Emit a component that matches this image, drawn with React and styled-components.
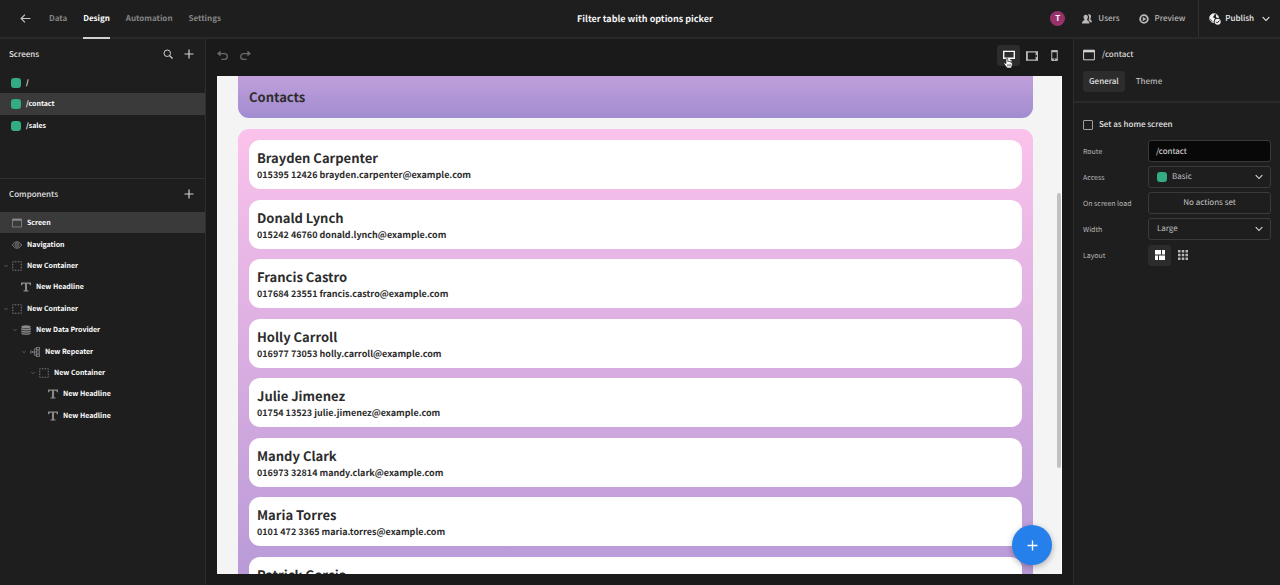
import { useState } from "react";
import styled, { createGlobalStyle } from "styled-components";

const navLinks = ["Data", "Design", "Automation", "Settings"];

const screens = ["/", "/contact", "/sales"];

const components = [
    { name: "Screen", icon: "screen", level: 0 },
    { name: "Navigation", icon: "eye", level: 0 },
    { name: "New Container", icon: "container", level: 0, open: true },
    { name: "New Headline", icon: "text", level: 1 },
    { name: "New Container", icon: "container", level: 0, open: true },
    { name: "New Data Provider", icon: "data", level: 1, open: true },
    { name: "New Repeater", icon: "repeater", level: 2, open: true },
    { name: "New Container", icon: "container", level: 3, open: true },
    { name: "New Headline", icon: "text", level: 4 },
    { name: "New Headline", icon: "text", level: 4 },
];

const contacts = [
    { name: "Brayden Carpenter", details: "015395 12426 brayden.carpenter@example.com" },
    { name: "Donald Lynch", details: "015242 46760 donald.lynch@example.com" },
    { name: "Francis Castro", details: "017684 23551 francis.castro@example.com" },
    { name: "Holly Carroll", details: "016977 73053 holly.carroll@example.com" },
    { name: "Julie Jimenez", details: "01754 13523 julie.jimenez@example.com" },
    { name: "Mandy Clark", details: "016973 32814 mandy.clark@example.com" },
    { name: "Maria Torres", details: "0101 472 3365 maria.torres@example.com" },
    { name: "Patrick Garcia", details: "" },
];

// every icon is drawn on a 20 x 20 grid
const icons = {
    back: <path d="M19 10H2M9 3L2 10l7 7" fill="none" stroke="currentColor" strokeWidth="2" />,
    search: (
        <g fill="none" stroke="currentColor" strokeWidth="2">
            <circle cx="8.5" cy="8.5" r="6.5" />
            <path d="M13.2 13.2L19 19" strokeWidth="2.6" />
        </g>
    ),
    plus: <path d="M10 1v18M1 10h18" fill="none" stroke="currentColor" strokeWidth="2.4" />,
    chevron: <path d="M2.5 6l7.5 8 7.5-8" fill="none" stroke="currentColor" strokeWidth="2.6" strokeLinecap="round" />,
    undo: (
        <>
            <path d="M5 6.5h8.5a4.7 4.7 0 010 10.5H8" fill="none" stroke="currentColor" strokeWidth="2.4" />
            <path d="M0 6.5L6.5 1v11z" fill="currentColor" />
        </>
    ),
    redo: (
        <>
            <path d="M15 6.5H6.5a4.7 4.7 0 000 10.5H12" fill="none" stroke="currentColor" strokeWidth="2.4" />
            <path d="M20 6.5L13.5 1v11z" fill="currentColor" />
        </>
    ),
    desktop: (
        <>
            <path d="M1.2 2.2h17.6v11.6H1.2z" fill="none" stroke="currentColor" strokeWidth="2.2" />
            <path d="M8 14h4v3h2.5v2h-9v-2H8z" fill="currentColor" />
        </>
    ),
    tablet: (
        <>
            <path d="M1 3h18v14H1z" fill="none" stroke="currentColor" strokeWidth="2" />
            <path d="M1 2.5h2v15H1zM16 2.5h3v15h-3z" fill="currentColor" />
            <circle cx="17" cy="10" r="1.5" fill="#1a1a1a" />
        </>
    ),
    phone: (
        <>
            <path d="M5 1h10v18H5z" fill="none" stroke="currentColor" strokeWidth="1.8" />
            <path d="M4.5 1h11v3h-11zM4.5 15.5h11V19h-11z" fill="currentColor" />
            <circle cx="10" cy="17" r="1.3" fill="#1a1a1a" />
        </>
    ),
    screen: (
        <>
            <path d="M1 2h18v16H1z" fill="none" stroke="currentColor" strokeWidth="1.6" />
            <path d="M1 2h18v3.5H1z" fill="currentColor" />
        </>
    ),
    eye: (
        <>
            <path d="M1 10c4-8.5 14-8.5 18 0-4 8.5-14 8.5-18 0z" fill="none" stroke="currentColor" strokeWidth="1.8" />
            <circle cx="10" cy="10" r="4" fill="none" stroke="currentColor" strokeWidth="1.6" />
            <circle cx="10" cy="10" r="1.6" fill="currentColor" />
        </>
    ),
    container: (
        <path d="M1.5 1.5h17v17h-17z" fill="none" stroke="currentColor" strokeWidth="1.8" strokeDasharray="3 2.667" strokeDashoffset="1.5" />
    ),
    text: <path d="M0 1h20v5.5h-2.200L16.500 3.500H12v13l3 .5v2H5v-2l3-.5v-13H3.500L2.200 6.500H0z" fill="currentColor" />,
    data: (
        <>
            <ellipse cx="10" cy="3.5" rx="9.5" ry="3.2" fill="currentColor" />
            <path d="M.5 5.500c2 2.700 17 2.700 19 0v3.300c-2 2.800-17 2.800-19 0zM.5 10.700c2 2.700 17 2.700 19 0v2.800c-2 2.800-17 2.800-19 0zM.5 15.200c2 2.700 17 2.700 19 0v1.500c0 4-19 4-19 0z" fill="currentColor" />
        </>
    ),
    repeater: (
        <g fill="none" stroke="currentColor" strokeWidth="1.6">
            <circle cx="3" cy="10" r="2.3" />
            <path d="M5.300 10H13M9 10V3.500h4M9 10v6.500h4" />
            <rect x="13" y="1" width="6" height="4.5" />
            <rect x="13" y="7.8" width="6" height="4.5" />
            <rect x="13" y="14.5" width="6" height="4.5" />
        </g>
    ),
    users: (
        <>
            <path d="M12 1c4.500-1.500 6.500 1.500 6 5-.2 2-1 3-1.500 4 0 2 3.500 2 3.500 6.500h-4c-.5-3-2.500-4-3-5 2-3 2-7.500-1-10.500z" fill="currentColor" />
            <path d="M7.500 1.500c3 0 4.500 2.200 4.300 5-.1 2-.9 3.500-1.900 4.500 0 2 5 2 5 8H0c0-6 5-6 5-8-1-1-1.800-2.500-1.900-4.500-.2-2.800 1.400-5 4.400-5z" fill="currentColor" />
        </>
    ),
    preview: (
        <>
            <circle cx="10" cy="10" r="7.7" fill="none" stroke="currentColor" strokeWidth="3.6" />
            <path d="M7.500 5.500l7 4.500-7 4.500z" fill="currentColor" />
        </>
    ),
    globe: (
        <>
            <circle cx="8.5" cy="8.5" r="7.5" fill="none" stroke="currentColor" strokeWidth="1.3" />
            <path d="M1.500 6l2.800-4 3.200-.8 2.500 1.600-2.500 2-.5 2.500 3 1.500-1.200 3.700L6.500 16 4 11.500 1.500 9.500zM12 2.500l3.500 3-1 3-3-1.500z" fill="currentColor" />
            <circle cx="14.5" cy="14.5" r="6" fill="#1e1e1e" />
            <circle cx="14.5" cy="14.5" r="5" fill="currentColor" />
            <path d="M11.800 14.500l2 2.200 3.500-4.200" fill="none" stroke="#1e1e1e" strokeWidth="1.6" />
        </>
    ),
    masonry: <path d="M0 0h12v9H0zM14 0h6v9h-6zM0 11h6v9H0zM8 11h12v9H8z" fill="currentColor" />,
    grid: (
        <path d="M0 0h5v5H0zM7.500 0h5v5h-5zM15 0h5v5h-5zM0 7.500h5v5H0zM7.500 7.500h5v5h-5zM15 7.500h5v5h-5zM0 15h5v5H0zM7.500 15h5v5h-5zM15 15h5v5h-5z" fill="currentColor" />
    ),
};

const Icon = ({ name, size = 10, color }) => (
    <Svg viewBox="0 0 20 20" $size={size} $color={color} aria-hidden="true">
        {icons[name]}
    </Svg>
);

const Header = () => (
    <TopBar>
        <Nav>
            <BackLink href="#back" aria-label="Back"><Icon name="back" size={11} /></BackLink>
            {navLinks.map((link) =>
                <NavLink key={link} href={`#${link}`} $active={link === "Design"}>{link}</NavLink>
            )}
        </Nav>
        <Title>Filter table with options picker</Title>
        <Actions>
            <Avatar>T</Avatar>
            <Action><Icon name="users" />Users</Action>
            <Action><Icon name="preview" />Preview</Action>
            <Publish>
                <Icon name="globe" size={12} />
                Publish
                <Icon name="chevron" size={8} />
            </Publish>
        </Actions>
    </TopBar>
);

const Sidebar = () => {
    const [screen, setScreen] = useState("/contact");
    const [selected, setSelected] = useState(0);

    return (
        <Side>
            <ScreensPanel>
                <PanelHead>
                    <PanelTitle>Screens</PanelTitle>
                    <PlainButton aria-label="Search screens"><Icon name="search" /></PlainButton>
                    <PlainButton aria-label="Add screen"><Icon name="plus" /></PlainButton>
                </PanelHead>
                <ScreenList>
                    {screens.map((route) =>
                        <Item key={route}>
                            <ScreenRow $active={route === screen} onClick={() => setScreen(route)}>
                                <Swatch />
                                {route}
                            </ScreenRow>
                        </Item>
                    )}
                </ScreenList>
            </ScreensPanel>
            <PanelHead>
                <PanelTitle>Components</PanelTitle>
                <PlainButton aria-label="Add component"><Icon name="plus" /></PlainButton>
            </PanelHead>
            <Tree>
                {components.map((item, i) =>
                    <Item key={i}>
                        <TreeRow $level={item.level} $active={i === selected} onClick={() => setSelected(i)}>
                            <Arrow>{item.open && <Icon name="chevron" size={4} />}</Arrow>
                            <Icon name={item.icon} color="#8a8a8a" />
                            <TreeLabel>{item.name}</TreeLabel>
                        </TreeRow>
                    </Item>
                )}
            </Tree>
        </Side>
    );
};

const Preview = () => (
    <Main>
        <Toolbar>
            <ToolButton aria-label="Undo" $dim><Icon name="undo" size={11} /></ToolButton>
            <ToolButton aria-label="Redo" $dim><Icon name="redo" size={11} /></ToolButton>
            <Spacer />
            <ToolButton aria-label="Desktop" $active>
                <Icon name="desktop" size={12} />
                <Pointer viewBox="0 0 20 22" aria-hidden="true">
                    <path
                        d="M6 12.500V3c0-2.600 3.500-2.600 3.500 0v5c1-1 3-.7 3.200.7 1-.9 2.800-.5 3 .8 1.200-.5 2.800 0 2.800 1.700v3.500c0 2-1.500 3-1.500 5V21H7.500v-1.500c-1.500-1.500-3.500-4-5.500-7-1-2 1.500-3 4 0z"
                        fill="#fff" stroke="#111" strokeWidth="1.2"
                    />
                    <path d="M9.500 13.500v4M12 13.500v4M14.500 13.500v4" stroke="#111" strokeWidth="1.2" />
                </Pointer>
            </ToolButton>
            <ToolButton aria-label="Tablet"><Icon name="tablet" size={12} /></ToolButton>
            <ToolButton aria-label="Mobile"><Icon name="phone" size={11} /></ToolButton>
        </Toolbar>
        <Canvas>
            <Page>
                <Banner><BannerTitle>Contacts</BannerTitle></Banner>
                <Repeater>
                    <Cards>
                        {contacts.map((contact) =>
                            <Card key={contact.name}>
                                <CardName>{contact.name}</CardName>
                                <CardDetails>{contact.details}</CardDetails>
                            </Card>
                        )}
                    </Cards>
                </Repeater>
            </Page>
            <Scrollbar />
            <AddButton aria-label="Add"><Icon name="plus" size={11} /></AddButton>
        </Canvas>
    </Main>
);

const Settings = () => {
    const [route, setRoute] = useState("/contact");

    return (
        <SettingsPanel>
            <SettingsHead>
                <RouteTitle><Icon name="screen" size={12} />/contact</RouteTitle>
                <Tabs>
                    <Tab $active>General</Tab>
                    <Tab>Theme</Tab>
                </Tabs>
            </SettingsHead>
            <Form>
                <CheckLabel>
                    <Checkbox type="checkbox" />
                    Set as home screen
                </CheckLabel>
                <Field>
                    <Label htmlFor="route">Route</Label>
                    <Input id="route" value={route} onChange={(e) => setRoute(e.target.value)} />
                </Field>
                <Field>
                    <Label htmlFor="access">Access</Label>
                    <SelectBox>
                        <Swatch />
                        <Select id="access"><option>Basic</option></Select>
                        <Icon name="chevron" size={8} />
                    </SelectBox>
                </Field>
                <Field>
                    <Label htmlFor="load">On screen load</Label>
                    <ActionsButton id="load" type="button">No actions set</ActionsButton>
                </Field>
                <Field>
                    <Label htmlFor="width">Width</Label>
                    <SelectBox>
                        <Select id="width"><option>Large</option></Select>
                        <Icon name="chevron" size={8} />
                    </SelectBox>
                </Field>
                <Field>
                    <Label as="span">Layout</Label>
                    <Layouts>
                        <ToolButton type="button" aria-label="Flex layout" $active><Icon name="masonry" /></ToolButton>
                        <ToolButton type="button" aria-label="Grid layout"><Icon name="grid" /></ToolButton>
                    </Layouts>
                </Field>
            </Form>
        </SettingsPanel>
    );
};

const App = () => (
    <>
        <GlobalStyle />
        <Shell>
            <Header />
            <Body>
                <Sidebar />
                <Preview />
                <Settings />
            </Body>
        </Shell>
    </>
);

export default App;

const GlobalStyle = createGlobalStyle`
  * {
    box-sizing: border-box;
  }

  body {
    margin: 0;
    background: #1a1a1a;
  }

  body, button, input, select {
    font-family: "Noto Sans CJK SC", "Open Sans", sans-serif;
    font-size: 8px;
    line-height: 16px;
    color: #d8d8d8;
    text-rendering: geometricPrecision;
  }

  button {
    cursor: pointer;
  }
`;

const Svg = styled.svg`
  display: block;
  flex: none;
  width: ${({ $size }) => $size}px;
  height: ${({ $size }) => $size}px;
  color: ${({ $color }) => $color || "inherit"};
`;

const Shell = styled.div`
  display: flex;
  flex-direction: column;
  height: 100vh;
  overflow: hidden;
`;

const TopBar = styled.header`
  display: grid;
  grid-template-columns: 1fr auto 1fr;
  height: 39px;
  padding: 0 10px 0 20px;
  background: #1e1e1e;
  box-shadow: inset 0 -2px #292929;
`;

const Nav = styled.nav`
  display: flex;
  gap: 16px;
`;

const BackLink = styled.a`
  display: flex;
  align-items: center;
  margin-right: 2px;
  padding-bottom: 2px;
  color: #c8c8c8;
`;

const NavLink = styled.a`
  display: flex;
  align-items: center;
  border-bottom: 2px solid ${({ $active }) => ($active ? "#d0d0d0" : "transparent")};
  color: ${({ $active }) => ($active ? "#fff" : "#858585")};
  font-weight: 600;
  text-decoration: none;
`;

const Title = styled.h1`
  align-self: center;
  margin: 0;
  padding-bottom: 2px;
  color: #f4f4f4;
  font-size: 9px;
  font-weight: 600;
`;

const Actions = styled.div`
  display: flex;
  align-items: center;
  justify-content: flex-end;
  padding-bottom: 2px;
`;

const Avatar = styled.div`
  width: 15px;
  height: 15px;
  margin-right: 17px;
  border-radius: 50%;
  background: #97326b;
  color: #fff;
  font-weight: 600;
  line-height: 15px;
  text-align: center;
`;

const Action = styled.button`
  display: flex;
  align-items: center;
  gap: 6px;
  margin-right: 19px;
  padding: 0;
  border: 0;
  background: none;
  color: #b8b8b8;
  font-weight: 500;
`;

const Publish = styled(Action)`
  align-self: stretch;
  gap: 4px;
  margin: 0 0 0 -6px;
  padding-left: 10px;
  border-left: 1px solid #303030;
  color: #f0f0f0;

  svg:last-child {
    margin-left: 4px;
  }
`;

const Body = styled.div`
  display: flex;
  flex: 1;
  min-height: 0;
`;

const Side = styled.aside`
  flex: none;
  width: 206px;
  border-right: 1px solid #2e2e2e;
  background: #1e1e1e;
`;

const ScreensPanel = styled.section`
  min-height: 140px;
  border-bottom: 1px solid #303030;
`;

const PanelHead = styled.div`
  display: flex;
  align-items: center;
  gap: 11px;
  height: 32px;
  margin-bottom: 1px;
  padding: 0 11px 0 9px;
`;

const PanelTitle = styled.h2`
  flex: 1;
  margin: 0;
  color: #e4e4e4;
  font-size: 8px;
  font-weight: 500;
`;

const PlainButton = styled.button`
  padding: 0 0 2px;
  border: 0;
  background: none;
  color: #d0d0d0;
`;

const Tree = styled.ul`
  display: flex;
  flex-direction: column;
  min-height: 214px;
  margin: 0;
  padding: 0;
  list-style: none;
`;

const ScreenList = styled(Tree)`
  min-height: 64px;
`;

const Item = styled.li`
  display: flex;
  flex: 1;
`;

const Row = styled.button`
  display: flex;
  flex: 1;
  align-items: center;
  gap: 5px;
  border: 0;
  background: ${({ $active }) => ($active ? "#3a3a3a" : "none")};
  color: #fff;
  font-size: 7px;
  font-weight: 600;
  text-align: left;
`;

const ScreenRow = styled(Row)`
  padding: 1px 11px 0;
`;

const TreeRow = styled(Row)`
  gap: 2px;
  padding: 1px 0 0 ${({ $level }) => 2 + $level * 9}px;
`;

const Arrow = styled.span`
  display: flex;
  justify-content: center;
  width: 8px;
  color: #8a8a8a;
`;

const TreeLabel = styled.span`
  padding-left: 3px;
`;

const Swatch = styled.span`
  flex: none;
  width: 10px;
  height: 10px;
  border-radius: 3px;
  background: #33ab84;
`;

const Main = styled.main`
  display: flex;
  flex: 1;
  flex-direction: column;
  min-width: 0;
  background: #1a1a1a;
`;

const Toolbar = styled.div`
  display: flex;
  align-items: center;
  height: 37px;
  padding: 0 7px 4px 5px;
`;

const Spacer = styled.div`
  flex: 1;
`;

const ToolButton = styled.button`
  position: relative;
  display: flex;
  align-items: center;
  justify-content: center;
  width: 23px;
  height: 21px;
  padding: 0;
  border: 0;
  border-radius: 3px;
  background: ${({ $active }) => ($active ? "#2c2c2c" : "none")};
  color: ${({ $active, $dim }) => ($active ? "#fff" : $dim ? "#6a6a6a" : "#b8b8b8")};
`;

const Pointer = styled.svg`
  position: absolute;
  top: 12px;
  left: 6px;
  width: 10px;
  height: 12px;
`;

const Canvas = styled.div`
  position: relative;
  flex: 1;
  min-height: 0;
  margin: 0 11px 11px;
  overflow: hidden;
  border-right: 1px solid #fff;
  background: #f4f4f4;
`;

const Page = styled.div`
  display: flex;
  flex-direction: column;
  gap: 11px;
  padding: 0 28px 0 21px;
`;

const Banner = styled.section`
  padding: 10px 11px;
  border-radius: 0 0 11px 11px;
  background: linear-gradient(#c09fda, #a18cd1);
`;

const BannerTitle = styled.h2`
  margin: 0;
  color: #2c2c2c;
  font-size: 13px;
  font-weight: 600;
  line-height: 22px;
`;

const Repeater = styled.section`
  min-height: 606px;
  padding: 11px;
  border-radius: 11px;
  background: linear-gradient(#fbc2eb, #a18cd1);
`;

// cards spread evenly over the height of the list
const Cards = styled.div`
  display: flex;
  flex-direction: column;
  justify-content: space-between;
  min-height: 466px;
`;

const Card = styled.article`
  height: 49px;
  padding: 8px;
  border-radius: 11px;
  background: #fff;
`;

const CardName = styled.h3`
  margin: 0;
  color: #2c2c2c;
  font-size: 13px;
  font-weight: 600;
  line-height: 20px;
`;

const CardDetails = styled.p`
  margin: 0;
  color: #2c2c2c;
  font-size: 9px;
  font-weight: 600;
  line-height: 13px;
`;

const Scrollbar = styled.div`
  position: absolute;
  top: 117px;
  right: 0;
  width: 4px;
  height: 275px;
  border-radius: 2px;
  background: #c1c1c1;
`;

const AddButton = styled.button`
  position: absolute;
  right: 9px;
  bottom: 9px;
  display: flex;
  align-items: center;
  justify-content: center;
  width: 40px;
  height: 40px;
  border: 0;
  border-radius: 50%;
  background: #2680eb;
  box-shadow: 0 2px 6px rgba(0, 0, 0, 0.3);
  color: #fff;
`;

const SettingsPanel = styled.aside`
  flex: none;
  width: 207px;
  border-left: 1px solid #2e2e2e;
  background: #1e1e1e;
`;

const SettingsHead = styled.div`
  padding: 8px 9px 9px;
  border-bottom: 2px solid #292929;
`;

const RouteTitle = styled.h2`
  display: flex;
  align-items: center;
  gap: 7px;
  margin: 0 0 8px;
  font-size: 8px;
  font-weight: 500;
`;

const Tabs = styled.div`
  display: flex;
  gap: 5px;
`;

const Tab = styled.button`
  height: 21px;
  padding: 0 6px;
  border: 0;
  border-radius: 3px;
  background: ${({ $active }) => ($active ? "#2c2c2c" : "none")};
  color: ${({ $active }) => ($active ? "#e4e4e4" : "#b8b8b8")};
  font-weight: 500;
`;

const Form = styled.form`
  display: flex;
  flex-direction: column;
  gap: 4px;
  padding: 13px 9px;
`;

const CheckLabel = styled.label`
  display: flex;
  align-items: center;
  gap: 6px;
  height: 18px;
  margin-bottom: 2px;
  color: #e4e4e4;
  font-weight: 500;
`;

const Checkbox = styled.input`
  width: 10px;
  height: 10px;
  margin: 0;
  border: 1px solid #a0a0a0;
  border-radius: 1px;
  appearance: none;

  &:checked {
    background: #2680eb;
  }
`;

const Field = styled.div`
  display: grid;
  grid-template-columns: 65px 1fr;
  align-items: center;
  height: 22px;
`;

const Label = styled.label`
  padding-top: 1px;
  color: #b8b8b8;
  font-size: 7px;
`;

const Input = styled.input`
  width: 100%;
  height: 22px;
  padding: 0 7px;
  border: 1px solid #3a3a3a;
  border-radius: 3px;
  background: #080808;
  color: #e4e4e4;
`;

const SelectBox = styled.div`
  display: flex;
  align-items: center;
  gap: 5px;
  height: 22px;
  padding: 0 7px 0 8px;
  border: 1px solid #3a3a3a;
  border-radius: 3px;
`;

const Select = styled.select`
  flex: 1;
  min-width: 0;
  padding: 0;
  border: 0;
  outline: 0;
  background: #1e1e1e;
  color: #c0c0c0;
  appearance: none;
`;

const ActionsButton = styled.button`
  height: 22px;
  border: 1px solid #3a3a3a;
  border-radius: 3px;
  background: none;
  color: #c8c8c8;
`;

const Layouts = styled.div`
  display: flex;
`;
